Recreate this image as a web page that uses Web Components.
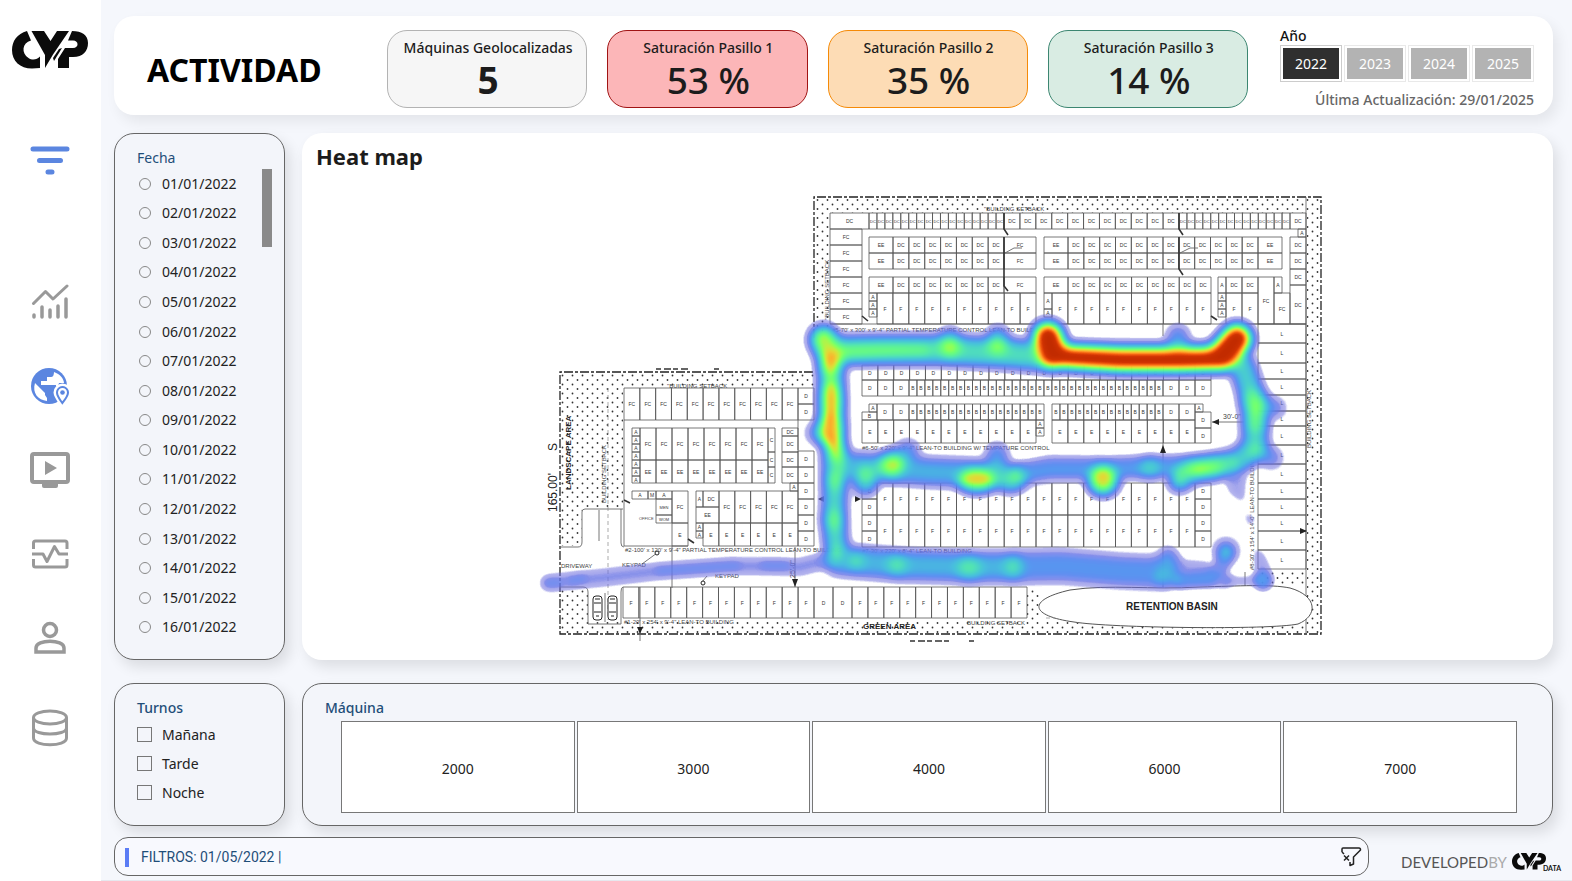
<!DOCTYPE html>
<html lang="es">
<head>
<meta charset="utf-8">
<meta name="viewport" content="width=device-width, initial-scale=1">
<title>Actividad</title>
<style>
  html, body { margin: 0; }
  body { font: 14px/20px "Noto Sans", "Open Sans", sans-serif; color: #222; background: #f5f7fc; }
</style>
</head>
<body>
<cyp-app></cyp-app>
<script>
const define = (name, html, setup) => {
  const tpl = document.createElement('template');
  tpl.innerHTML = '<style>*{box-sizing:border-box}</style>' + html;
  customElements.define(name, class extends HTMLElement {
    constructor() {
      super();
      this.attachShadow({ mode: 'open' }).append(tpl.content.cloneNode(true));
    }
    connectedCallback() { if (setup) setup(this.shadowRoot, this); }
  });
};

/* ---------- brand mark ---------- */
define('cyp-logo', `
<style>:host{display:block} svg{display:block;width:100%;height:auto}</style>
<svg viewBox="0 0 76 38" role="img" aria-label="CYP" fill="#0b0b0b">
  <path d="M15 0 C5 3 0 10 0 19 C0 30 8 37.500 20 37.500 L28 37 V25.500 C25 29 20 29.500 16.500 27 C9 22 10 12 19 9.500 Z"/>
  <path d="M19.500 0 H32 L38.500 10 L45 0 H57 L41 23.500 L33 37 V24 Z"/>
  <path d="M60 0 C70 0 76 4 76 12 C76 20 71 26 61 26 H57 V37 H46 V28 L53 17 H61 C67 17 67 9.500 61 9.500 H56 Z"/>
  <path d="M47 18 L50 17 L42 30 L41 27 Z"/>
</svg>`);

/* ---------- sidebar ---------- */
define('cyp-sidebar', `
<style>
  :host{display:flex;flex-direction:column;align-items:center;background:#fff;padding:31px 2px 0 0}
  cyp-logo{width:76px;margin-bottom:49px}
  nav{display:flex;flex-direction:column;align-items:center;color:#999}
  a,button{display:flex;align-items:center;justify-content:center;width:64px;height:84px;color:inherit;border:0;background:none;padding:0}
  .on{color:#5b86e0}
  .filter{margin-bottom:58px}
  .data{margin-top:6px}
  svg{display:block;fill:none;stroke:currentColor}
</style>
<cyp-logo></cyp-logo>
<nav aria-label="Secciones">
  <button class="on filter" aria-label="Filtros"><svg width="40" height="30" viewBox="0 0 40 30" stroke-width="5" stroke-linecap="round"><path d="M3 4H37M9.500 15.500H30.500M18 27H22"/></svg></button>
  <a href="#tendencias" aria-label="Tendencias"><svg width="38" height="36" viewBox="0 0 38 36" stroke-linecap="round"><path stroke-width="3" stroke-linejoin="round" d="M2.500 19.500 14.500 7.500 22 15 36 2"/><path stroke-width="3.500" d="M3 31V33M11 23V33M19 26V33M27 22V33M35 15V33"/></svg></a>
  <a class="on" href="#mapa" aria-label="Mapa"><svg width="40" height="38" viewBox="0 0 40 38"><circle cx="19" cy="19" r="18" fill="currentColor" stroke="none"/><path fill="#fff" stroke="none" d="M24 5 C30 7 34 12 34 16 L29 16 28 19 H26 V18 H11 V14 H17 V10 H21 C23 10 24 8 24 5Z M5 16 L15 26 V28 L17 31 V34 C8 33 2 26 5 16Z"/><path fill="currentColor" stroke="#fff" stroke-width="3" d="M32 38.500 C28 33 25 29 25 25.500 A7.500 7.500 0 0 1 40 25.500 C40 29 37 33 32 38.500Z"/><path fill="#fff" stroke-width="2" d="M32.300 36 C29 31.500 27 29 27 25.500 A5.500 5.500 0 0 1 38 25.500 C38 29 36 31.500 32.300 36Z"/><circle cx="32.500" cy="25.500" r="2.300" fill="currentColor" stroke="none"/></svg></a>
  <a href="#video" aria-label="Video"><svg width="40" height="38" viewBox="0 0 40 38"><rect x="2" y="3" width="36" height="28" rx="2" stroke-width="4"/><path fill="currentColor" stroke="none" d="M12 32H28V35Q28 37 26 37H14Q12 37 12 35ZM15 10 27 17 15 24Z"/></svg></a>
  <a href="#monitor" aria-label="Monitor"><svg width="38" height="32" viewBox="0 0 38 32" stroke-width="3"><path d="M2.500 11V5Q2.500 3 4.500 3H34Q36 3 36 5V11M2.500 21V27Q2.500 29 4.500 29H34Q36 29 36 27V21" /><path stroke-linejoin="round" d="M1 16H12L16 23.500 23.500 8.500 28 16H37"/></svg></a>
  <a href="#usuario" aria-label="Usuario"><svg width="34" height="34" viewBox="0 0 34 34" stroke-width="3.500"><circle cx="17" cy="9" r="6.500"/><path d="M3 31V27C3 18 31 18 31 27V31Z"/></svg></a>
  <a class="data" href="#datos" aria-label="Datos"><svg width="38" height="38" viewBox="0 0 38 38" stroke-width="3"><ellipse cx="19" cy="8.500" rx="16.500" ry="6.500"/><path d="M2.500 8.500V29C2.500 38 35.500 38 35.500 29V8.500M2.500 19C2.500 27 35.500 27 35.500 19"/></svg></a>
</nav>`);

/* ---------- KPI card ---------- */
define('kpi-card', `
<style>
  :host{display:flex;flex-direction:column;align-items:center;height:78px;border:1px solid var(--line);border-radius:20px;background:var(--fill);padding:6px 0 0 2px;color:#1c1c1c;white-space:nowrap}
  .name{font-size:14px;line-height:22px;font-weight:500}
  .value{font-size:37px;line-height:42px;font-weight:500}
  :host([strong]) .value{font-weight:700}
</style>
<span class="name"><slot name="name"></slot></span><span class="value"><slot></slot></span>`);

/* ---------- year filter ---------- */
define('year-filter', `
<style>
  :host{display:flex;flex-direction:column}
  .label{font-weight:500;line-height:18px;color:#111;margin:-3px 0 0}
  .years{display:grid;grid-template-columns:repeat(4,1fr);gap:2px}
  button{height:37px;border:1px solid #e9e9e9;background:#b3b3b3;background-clip:content-box;padding:2px;color:#fff;font:14px/20px "Noto Sans",sans-serif}
  button[aria-pressed=true]{background-color:#2f2f2f;border-color:#ccc}
  p{margin:9px 0 0;text-align:right;color:#666;font-weight:500;line-height:18px}
</style>
<span class="label">Año</span>
<div class="years" role="group" aria-label="Año"><button aria-pressed="true">2022</button><button>2023</button><button>2024</button><button>2025</button></div>
<p>Última Actualización: 29/01/2025</p>`);

/* ---------- outlined panel ---------- */
define('side-panel', `
<style>
  :host{display:flex;flex-direction:column;border:1px solid #666;border-radius:20px;background:#f3f5fa;box-shadow:5px 7px 14px rgba(0,0,0,.11);padding:13px 12px 12px 22px}
  h2{margin:0;font-size:14px;line-height:22px;font-weight:var(--title-weight,400);color:#1f4e79}
  .body{flex:1;display:flex;flex-direction:column}
</style>
<h2><slot name="title"></slot></h2><div class="body"><slot></slot></div>`);

const optionCss = `
  label{display:flex;align-items:center;color:#222}
  input{appearance:none;margin:0 11px 0 0;border:1px solid #777}
  input[type=radio]{width:12px;height:12px;border-radius:50%;margin:0 11px 0 2px;border-color:#888}
  input[type=checkbox]{width:15px;height:15px;margin-right:10px}`;

define('date-list', `
<style>
  :host{display:flex;flex:1;justify-content:space-between}
  .list{display:flex;flex-direction:column;padding-bottom:5px;flex:1}
  .list label{flex:1;min-height:29px}
  .thumb{width:10px;height:78px;background:#8a8a8a}
  ${optionCss}
</style>
<div class="list" role="radiogroup" aria-label="Fecha"></div><div class="thumb"></div>`,
root => {
  root.querySelector('.list').innerHTML = Array.from({ length: 16 }, (_, i) =>
    `<label><input type="radio" name="fecha">${String(i + 1).padStart(2, '0')}/01/2022</label>`).join('');
});

define('shift-list', `
<style>:host{display:block;padding-top:1px} label{height:29px} ${optionCss}</style>
<label><input type="checkbox">Mañana</label><label><input type="checkbox">Tarde</label><label><input type="checkbox">Noche</label>`);

define('machine-list', `
<style>
  :host{display:grid;grid-template-columns:repeat(5,1fr);gap:2px;padding:2px 23px 0 16px}
  button{height:92px;border:1px solid #777;background:#fff;color:#222;font:14px/20px "Noto Sans",sans-serif;padding:4px 0 0}
</style>
<button>2000</button><button>3000</button><button>4000</button><button>6000</button><button>7000</button>`);

/* ---------- heat map ---------- */
const plan = () => {
  let lines = '', text = '';
  const box = (x1, y1, x2, y2) => { lines += `M${x1} ${y1}H${x2}V${y2}H${x1}Z`; };
  const tag = (x, y, t, small) => { text += `<text${small ? ' class="s"' : ''} x="${x}" y="${y + 2}">${t}</text>`; };
  const cell = (x1, y1, x2, y2, t) => { box(x1, y1, x2, y2); if (t) tag((x1 + x2) / 2, (y1 + y2) / 2, t, t.length * 7 > x2 - x1); };
  const row = (x, y1, y2, x2, n, t) => { const w = (x2 - x) / n; for (let i = 0; i < n; i++) cell(x + i * w, y1, x + (i + 1) * w, y2, t); };
  const col = (x1, x2, ys, t) => { for (let i = 1; i < ys.length; i++) cell(x1, ys[i - 1], x2, ys[i], t); };

  /* upper building */
  cell(830, 213, 869, 229, 'DC'); row(869, 213, 229, 1004, 17, 'DC'); row(1004, 213, 229, 1179, 11, 'DC');
  row(1179, 213, 229, 1290, 14, 'DC'); cell(1290, 213, 1306, 229, 'DC'); cell(1298, 229, 1306, 237, 'A');
  col(830, 862, [229, 245, 261, 277, 293, 309, 324], 'FC');
  for (const y of [237, 253, 277]) {
    cell(869, y, 893, y + 16, 'EE'); row(893, y, y + 16, 1004, 7, 'DC'); cell(1004, y, 1036, y + 16, 'FC');
    cell(1044, y, 1068, y + 16, 'EE');
    if (y < 277) { row(1068, y, y + 16, 1258, 12, 'DC'); cell(1258, y, 1282, y + 16, 'EE'); }
    else row(1068, y, y + 16, 1211, 9, 'DC');
  }
  row(877, 293, 324, 1036, 10, 'F'); row(1052, 293, 324, 1211, 10, 'F');
  col(869, 877, [293, 301, 309, 317], 'A'); col(1044, 1052, [293, 309, 317], 'A'); col(1218, 1226, [277, 293, 301, 309, 317], 'A');
  row(1226, 277, 293, 1258, 2, 'DC'); row(1226, 293, 324, 1258, 2, 'F'); cell(1258, 277, 1274, 324, 'FC');
  cell(1274, 277, 1282, 293, 'A'); cell(1274, 293, 1290, 324, 'FC'); col(1290, 1306, [237, 253, 269, 285, 324], 'DC');
  col(1258, 1306, [324, 343, 363, 379, 395, 411, 426, 445, 464, 483, 499, 515, 531, 550, 569], 'L');
  lines += 'M830 324H1306M1306 197V634';

  /* middle building */
  row(862, 365, 380, 1211, 22, 'D'); row(862, 380, 396, 909, 3, 'D'); row(909, 380, 396, 1163, 32, 'B'); row(1163, 380, 396, 1211, 3, 'D');
  cell(869, 404, 877, 412, 'A'); row(877, 404, 420, 909, 2, 'D'); row(909, 404, 420, 1044, 17, 'B'); row(1052, 404, 420, 1163, 14, 'B'); row(1163, 404, 420, 1195, 2, 'D');
  cell(862, 412, 877, 420, 'B'); row(862, 420, 443, 1036, 11, 'E'); row(1052, 420, 443, 1195, 9, 'E');
  col(1036, 1044, [420, 428, 436], 'A'); cell(1195, 404, 1203, 412, 'A'); col(1195, 1211, [412, 428, 443], 'D');
  col(862, 877, [483, 499, 515, 531, 547], 'D'); col(1195, 1211, [483, 499, 515, 531, 547], 'D');
  row(877, 483, 515, 1195, 20, 'F'); row(877, 515, 547, 1195, 20, 'F');

  /* left building */
  row(624, 388, 420, 798, 11, 'FC'); col(798, 814, [388, 404, 420], 'D');
  col(798, 814, [451, 467, 483, 499, 515, 531, 546], 'D');
  col(632, 640, [428, 436, 444, 452, 460, 468, 476, 483], 'A');
  row(640, 428, 460, 768, 8, 'FC'); row(640, 460, 483, 768, 8, 'EE'); col(768, 775, [428, 452, 467, 483], 'C');
  col(782, 798, [428, 436, 452, 467, 483], 'DC'); cell(790, 483, 798, 491, 'A');
  cell(632, 491, 648, 499, 'A'); cell(648, 491, 656, 499, 'M'); cell(656, 491, 672, 499, 'A');
  cell(672, 491, 688, 523, 'FC'); cell(672, 523, 688, 546, 'E'); cell(656, 499, 672, 515, 'MEN'); cell(656, 515, 672, 523, 'WOM');
  cell(696, 491, 703, 507, 'A'); cell(703, 491, 719, 507, 'DC'); cell(696, 507, 719, 523, 'EE'); row(719, 491, 523, 798, 5, 'FC');
  row(703, 523, 546, 798, 6, 'E'); col(696, 703, [523, 531, 538], 'A');
  lines += 'M624 420V546H688M798 420V450';

  /* bottom row */
  row(623, 587, 618, 814, 12, 'F'); row(814, 587, 618, 852, 2, 'D'); row(852, 587, 618, 1027, 11, 'F');
  return { lines, text };
};

define('heat-map', `
<style>
  :host{display:flex;flex-direction:column;background:#fff;border-radius:20px;box-shadow:5px 7px 14px rgba(0,0,0,.1);padding:9px 14px}
  h1{margin:0;font-size:22px;line-height:28px;font-weight:700;color:#1c1c1c}
  .map{display:flex;justify-content:center;padding-top:11px}
  svg{display:block;width:800px;max-width:100%;height:auto;font-family:"Liberation Sans",Arial,sans-serif}
  .cells{font-size:5px;text-anchor:middle;fill:#333}
  .cells .s{font-size:4px}
  .notes{font-size:6px;fill:#444}
  .bold{font-weight:700;fill:#222}
</style>
<h1>Heat map</h1>
<div class="map"><svg viewBox="528 181 800 470" role="img" aria-label="Mapa de calor de la actividad">
  <defs>
    <pattern id="dots" x="560" y="373" width="10" height="9" patternUnits="userSpaceOnUse"><circle cx="2.500" cy="2.500" r=".9" fill="#333"/><circle cx="7.500" cy="7" r=".9" fill="#333"/></pattern>
    <filter id="soft" filterUnits="userSpaceOnUse" x="500" y="280" width="840" height="360"><feGaussianBlur stdDeviation="5.500"/></filter>
    <filter id="tight" filterUnits="userSpaceOnUse" x="500" y="280" width="840" height="360"><feGaussianBlur stdDeviation="3"/></filter>
    <filter id="ramp" filterUnits="userSpaceOnUse" x="500" y="280" width="840" height="360" color-interpolation-filters="sRGB">
      <feColorMatrix in="SourceGraphic" values="0 0 0 1 0  0 0 0 1 0  0 0 0 1 0  0 0 0 0 1"/>
      <feComponentTransfer result="color">
        <feFuncR type="table" tableValues=".42 .42 .42 .38 .34 .31 .28 .27 .27 .29 .32 .36 .42 .56 .76 .90 .98 1 .94 .82 .76"/>
        <feFuncG type="table" tableValues=".42 .42 .43 .47 .52 .58 .66 .73 .79 .85 .91 .96 1 1 .93 .83 .70 .53 .34 .20 .17"/>
        <feFuncB type="table" tableValues=".86 .86 .88 .92 .94 .94 .90 .87 .82 .75 .66 .56 .45 .33 .24 .19 .16 .12 .05 .01 0"/>
      </feComponentTransfer>
      <feComponentTransfer in="SourceGraphic" result="shape">
        <feFuncA type="table" tableValues="0 0 .5 .55 .6 .8 .83 .86 .92 .95 .96 .97 .98 .98 .98 .98 .98 .98 .98 .98 .98 .98 .98 .98 .98 .98 .98 .98 .98 .98 .98 .98 .98 .98 1 1 1 1 1 1 1"/>
      </feComponentTransfer>
      <feComposite in="color" in2="shape" operator="in"/>
    </filter>
  </defs>
  <g fill="url(#dots)">
    <path d="M815 198H1321V213H815ZM815 213H829V334H815ZM1307 213H1321V634H1307ZM560 620H1321V634H560ZM560 373H814V388H560ZM560 388H623V508H560ZM560 508H582V546H560ZM560 588H588V620H560ZM1027 588H1040V620H1027ZM1259 571H1306V585H1259Z"/>
  </g>
  <g fill="none" stroke="#222" stroke-width="1.300" stroke-dasharray="9 2 3 2"><path d="M814 338V197H1321V634H560V372H814"/></g>
  <path id="lines" fill="none" stroke="#555" stroke-width=".8"/>
  <path fill="none" stroke="#333" stroke-width="1.600" d="M1004 213V229L1008 235M1004 237V286L1008 291M1179 213V229L1183 235M1179 237V269L1183 275M862 316 868 321M1211 316 1217 320M624 500 630 503M688 539 694 543"/>
  <path fill="none" stroke="#666" stroke-width=".9" d="M560 547H578Q582 547 582 542V512Q582 509 585 509H623M621 509V543Q621 547 624 547M599 510V541M588 624V592Q588 587 583 587H560M623 587Q621 587 621 592V624H588M605 593V622M672 546V588M640 587V641M795 547V587M1163 324V336M1163 443V483M1163 547V587M1245 572V596M1212 422H1244M642 564 657 553M707 576 702 582M1005 253 1014 248H1022M1180 253 1190 248H1198"/>
  <path fill="none" stroke="#888" stroke-width=".7" stroke-dasharray="4 3" d="M608 388V620M1046 618H1306"/>
  <path fill="#222" d="M640 634 637 627H643ZM795 587 792 579H798ZM1163 445 1160 453H1166ZM1212 422 1219 419V425ZM1307 531 1300 528V534ZM818 499 824 496V502ZM861 499 855 496V502Z"/>
  <g fill="#fff" stroke="#222"><rect x="593" y="596" width="9" height="24" rx="3"/><rect x="608" y="596" width="9" height="24" rx="3"/><path d="M594 603H601M594 612H601M609 603H616M609 612H616M595 599H600M610 599H615M596 616H599M611 616H614"/><circle cx="657" cy="553" r="2"/><circle cx="703" cy="583" r="2"/></g>
  <path fill="#fff" stroke="#555" d="M1070 590C1110 584 1150 590 1200 587C1240 586 1270 584 1290 588C1318 596 1318 616 1298 624C1270 630 1110 628 1074 622C1030 616 1026 600 1070 590Z"/>
  <g class="cells" id="labels"></g>
  <g class="notes">
    <text x="984" y="211">"BUILDING SETBACK</text><text x="667" y="388">"BUILDING SETBACK</text><text x="967" y="625">BUILDING SETBACK</text>
    <text x="832" y="332">#5-70' x 300' x 9'-4" PARTIAL TEMPERATURE CONTROL LEAN-TO BUILDING</text>
    <text x="862" y="450">#6-50' x 220' x 9'-4" LEAN-TO BUILDING W/ TEMPATURE CONTROL</text>
    <text x="862" y="553">#7-30' x 220' x 8'-4" LEAN-TO BUILDING</text>
    <text x="625" y="552">#2-100' x 120' x 9'-4" PARTIAL TEMPERATURE CONTROL LEAN-TO BUILDING</text>
    <text x="624" y="624">#1-20' x 254' x 9'-4" LEAN-TO BUILDING</text>
    <text x="561" y="568">DRIVEWAY</text><text x="622" y="567">KEYPAD</text><text x="715" y="578">KEYPAD</text><text font-size="4" x="639" y="520">OFFICE</text>
    <text font-size="7" x="1223" y="419">30'-0"</text>
    <text transform="translate(829 320) rotate(-90)">"BUILDING SETBACK</text>
    <text transform="translate(606 503) rotate(-90)">BUILDING SETBACK</text>
    <text transform="translate(1311 448) rotate(-90)">BUILDING SETBACK</text>
    <text transform="translate(1254 570) rotate(-90)">#8-30' x 154' x 14'-0" LEAN-TO BUILDING</text>
    <text font-size="7" transform="translate(795 578) rotate(-90)">25'-0"</text>
    <text class="bold" font-size="8" x="863" y="629">GREEN AREA</text>
    <text class="bold" font-size="10" x="1126" y="610">RETENTION BASIN</text>
    <text class="bold" font-size="8" transform="translate(571 490) rotate(-90)">LANDSCAPE AREA</text>
    <text font-size="12" fill="#222" transform="translate(557 512) rotate(-90)">165.00'</text>
    <text font-size="12" fill="#222" transform="translate(557 451) rotate(-90)">S</text>
  </g>
  <path stroke="#333" stroke-width="1.500" fill="none" stroke-dasharray="5 3 7 2" d="M656 369H690M714 369H720M910 641H950M969 641H976"/>
  <g filter="url(#ramp)" stroke="#000" fill="none" stroke-linecap="round" stroke-linejoin="round">
    <g filter="url(#tight)">
      <path stroke-opacity=".12" stroke-width="15" d="M549 583 600 578 660 571 730 566 800 567 835 558"/>
      <path stroke-opacity=".07" stroke-width="8" d="M547 583H558M572 581 582 578M660 571 690 569 736 566M765 565H785"/>
      <path stroke-opacity=".12" stroke-width="18" d="M1020 472 1050 466 1110 467 1180 465 1230 464"/>
      <path stroke-opacity=".1" stroke-width="15" d="M1160 578H1190L1225 580M1170 556 1180 568 1205 570"/>
      <path stroke-opacity=".1" stroke-width="6" d="M1225 581H1245L1256 580"/>
      <path fill="#000" fill-opacity=".1" stroke="none" d="M1225 476H1245L1243 502 1230 492ZM1244 513 1255 518 1250 527ZM1255 547 1264 556 1271 572 1256 573Z"/>
      <circle cx="1263" cy="580" r="9" fill="#000" stroke="none" fill-opacity=".25"/>
      <path stroke-opacity=".15" stroke-width="14" d="M1226 553 1222 566 1210 578 1180 581"/>
    </g>
    <g filter="url(#soft)">
      <path stroke-opacity=".46" stroke-width="25" d="M823 340 833 351 880 350 940 350 1000 353 1050 357"/>
      <path stroke-opacity=".42" stroke-width="23" d="M824 338 831 362 832 405 832 436"/>
      <path stroke-opacity=".45" stroke-width="19" d="M834 452 835 480 834 520 836 545"/>
      <path stroke-opacity=".32" stroke-width="23" d="M850 466 880 468 930 472 980 474 1015 478"/>
      <path stroke-opacity=".17" stroke-width="16" d="M1020 476 1050 471 1100 471 1150 468 1200 468"/>
      <path stroke-opacity=".33" stroke-width="25" d="M838 560 900 565 970 567 1010 567"/>
      <path stroke-opacity=".24" stroke-width="27" d="M1018 567 1060 566 1120 571 1165 573"/>
      <path stroke-opacity=".12" stroke-width="16" d="M1166 556 1164 566"/>
      <path stroke-opacity=".42" stroke-width="21" d="M1242 365 1252 395 1255 410 1255 448 1237 462 1190 471 1182 477"/>
      <path stroke-opacity=".22" stroke-width="16" d="M1260 405 1275 408M1256 450 1272 458M816 433 830 436"/>
      <path stroke-opacity=".26" stroke-width="18" d="M997 454V462M1178 336V352M998 336V346M950 338V346M895 462 908 451M866 481V472"/>
      <g stroke="none" fill="#000">
        <path fill-opacity=".3" d="M838 346 890 345 930 346V354L880 356 838 358Z"/>
        <g fill-opacity=".26"><circle cx="950" cy="347" r="11"/><circle cx="997" cy="343" r="10"/><circle cx="1254" cy="402" r="13"/><circle cx="1256" cy="422" r="11"/><circle cx="1213" cy="469" r="10"/><circle cx="1198" cy="470" r="9"/><circle cx="865" cy="482" r="12"/><circle cx="1010" cy="480" r="11"/><circle cx="835" cy="480" r="10"/><circle cx="834" cy="520" r="10"/><circle cx="897" cy="565" r="10"/><circle cx="969" cy="568" r="12"/><circle cx="856" cy="561" r="8"/><circle cx="1226" cy="551" r="10"/><circle cx="1150" cy="468" r="10"/><circle cx="1178" cy="483" r="8"/></g>
        <circle cx="891" cy="465" r="13" fill-opacity=".48"/>
        <ellipse cx="977" cy="480" rx="19" ry="11" fill-opacity=".68"/>
        <circle cx="1103" cy="480" r="14" fill-opacity=".72"/>
        <ellipse cx="830" cy="364" rx="9" ry="13" fill-opacity=".62"/><ellipse cx="831" cy="401" rx="9" ry="22" fill-opacity=".68"/><ellipse cx="830" cy="430" rx="12" ry="17" fill-opacity=".64"/><ellipse cx="837" cy="450" rx="9" ry="12" fill-opacity=".5"/>
        <path fill-opacity=".3" d="M1060 345H1220V356H1060Z"/>
      </g>
      <path stroke-width="29" d="M1048 337 1053 354"/>
      <path stroke-width="22" d="M1052 356 1120 360 1180 360 1224 359"/>
      <path stroke-width="29" d="M1222 356 1237 339"/>
    </g>
  </g>
</svg></div>`,
root => {
  const { lines, text } = plan();
  root.getElementById('lines').setAttribute('d', lines);
  root.getElementById('labels').innerHTML = text;
});

/* ---------- footer ---------- */
define('filter-bar', `
<style>
  :host{display:flex;align-items:center}
  .bar{flex:1;display:flex;align-items:center;height:39px;border:1px solid #666;border-radius:14px;background:#f8f9fe;padding:1px 6px 0 10px}
  .mark{width:4px;height:19px;background:#5b7cf5;margin-right:12px}
  .text{flex:1;font-family:Roboto,sans-serif;color:#1f4e79}
  button{border:0;background:none;padding:0;width:22px;height:22px}
  .by{display:flex;align-items:center;width:185px;margin-left:7px;padding:10px 0 0 25px;font:15px/20px Lato,sans-serif;color:#555}
  .by span span{color:#aaa}
  cyp-logo{width:34px;margin-left:auto}
  small{font:700 7px/8px Lato,sans-serif;color:#111;align-self:flex-end;margin-left:-3px}
</style>
<div class="bar"><span class="mark"></span><span class="text">FILTROS: 01/05/2022 |</span>
<button aria-label="Borrar filtros"><svg width="22" height="22" viewBox="0 0 22 22" fill="none" stroke="#222" stroke-width="1.500" stroke-linejoin="round"><path d="M2 6V3Q2 2 3 2H19Q20.500 2 20.500 4L13.500 11V18L10 19.500V16M2 6 4 8"/><path d="M4 9.500 9 14.500M9 9.500 4 14.500"/></svg></button></div>
<div class="by"><span>DEVELOPED<span>BY</span></span><cyp-logo></cyp-logo><small>DATA</small></div>`);

/* ---------- page ---------- */
define('cyp-app', `
<style>
  :host{display:grid;grid-template-columns:101px 1fr;min-height:100vh}
  main{min-width:0;padding:16px 11px 4px 13px;border-bottom:1px solid #e6e8ee;display:flex;flex-direction:column}
  header{display:grid;grid-template-columns:220px repeat(4,1fr) 266px;column-gap:20px;background:#fff;border-radius:20px;box-shadow:5px 7px 14px rgba(0,0,0,.07);padding:14px 19px 6px 33px;margin:0 8px 18px 0}
  .name{margin:0;align-self:center;font-size:32px;line-height:44px;font-weight:700;color:#000}
  year-filter{margin-left:12px}
  .board{display:grid;grid-template-columns:171px 1fr;column-gap:17px;row-gap:23px;margin:0 8px 11px 0}
  .grey{--line:#b3b3b3;--fill:#f6f6f6}
  .red{--line:#a01414;--fill:#fcb6b8}
  .orange{--line:#f58a07;--fill:#fddcb5}
  .green{--line:#3c8671;--fill:#d9ece3}
  .strong{--title-weight:500}
</style>
<cyp-sidebar></cyp-sidebar>
<main>
  <header>
    <p class="name">ACTIVIDAD</p>
    <kpi-card class="grey" strong><span slot="name">Máquinas Geolocalizadas</span>5</kpi-card>
    <kpi-card class="red"><span slot="name">Saturación Pasillo 1</span>53 %</kpi-card>
    <kpi-card class="orange"><span slot="name">Saturación Pasillo 2</span>35 %</kpi-card>
    <kpi-card class="green"><span slot="name">Saturación Pasillo 3</span>14 %</kpi-card>
    <year-filter></year-filter>
  </header>
  <div class="board">
    <side-panel><span slot="title">Fecha</span><date-list></date-list></side-panel>
    <heat-map></heat-map>
    <side-panel class="strong"><span slot="title">Turnos</span><shift-list></shift-list></side-panel>
    <side-panel class="strong"><span slot="title">Máquina</span><machine-list></machine-list></side-panel>
  </div>
  <filter-bar></filter-bar>
</main>`);
</script>
</body>
</html>
